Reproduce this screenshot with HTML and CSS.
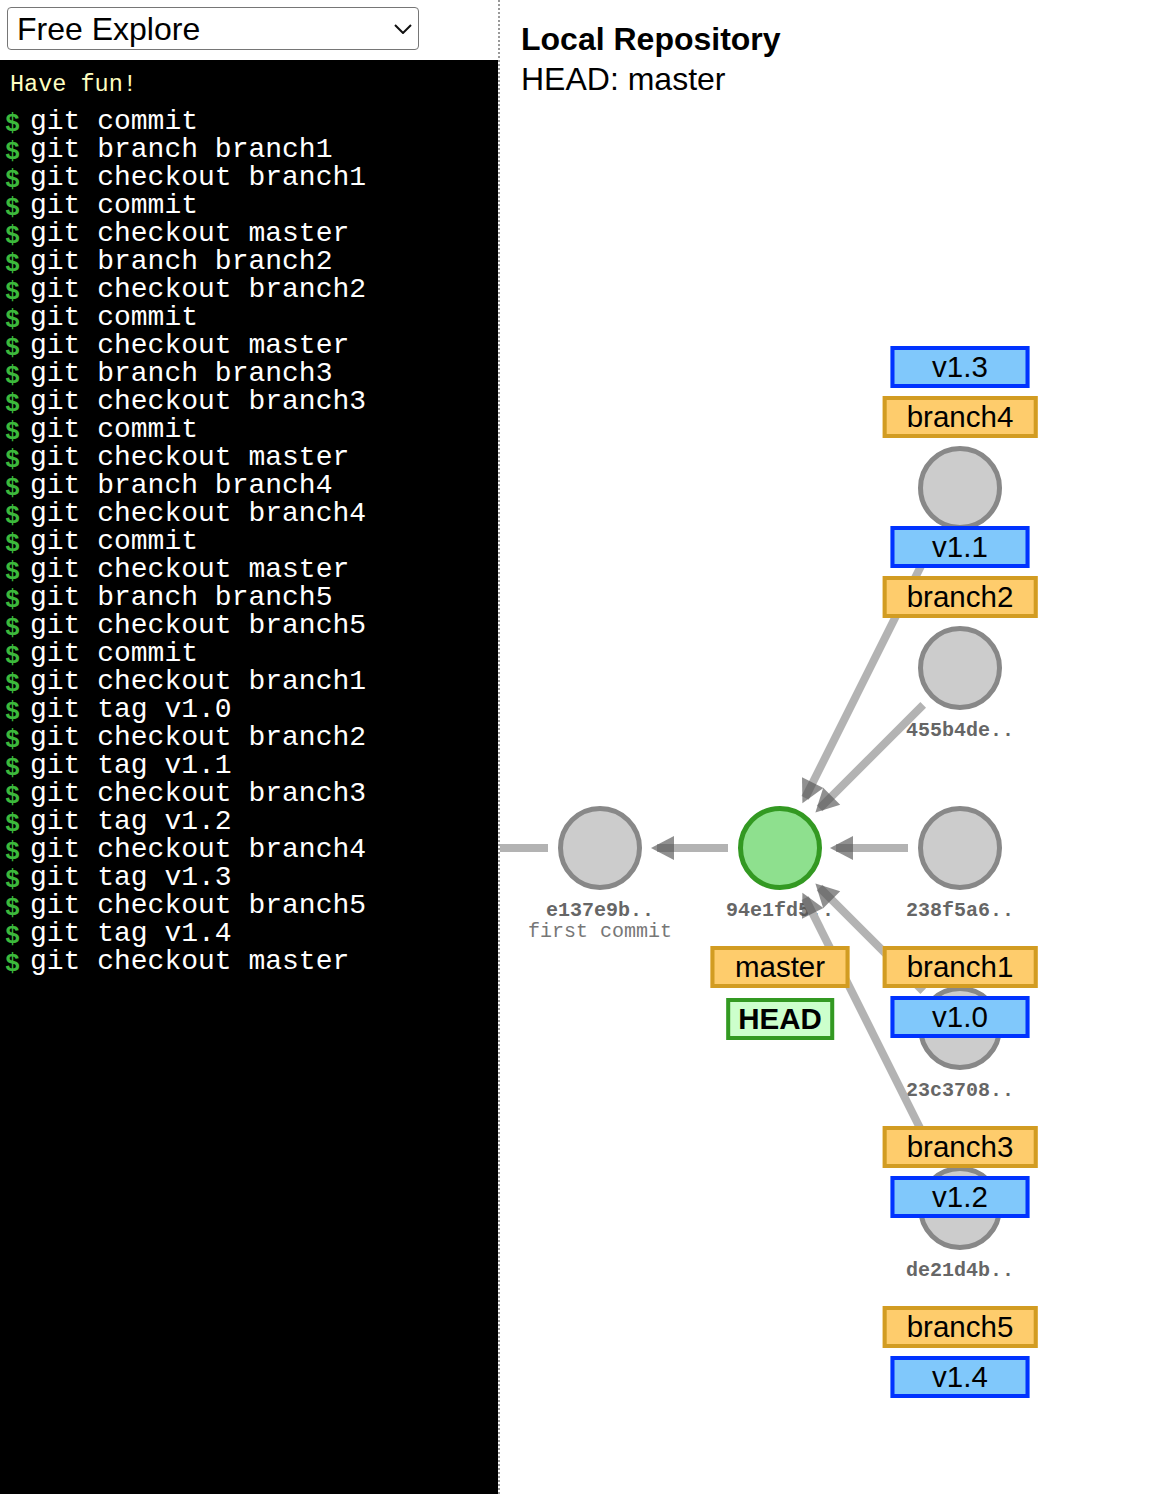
FILE: index.html
```html
<!doctype html>
<html lang="en">
<head>
    <meta charset="UTF-8">
    <meta name="viewport" content="width=device-width, initial-scale=1.0">
    <title>Git Sandbox - Free Explore</title>
    <link rel="stylesheet" href="styles.css">
</head>
<body>
    <div class="page">
        <div class="side">
            <div class="picker">
                <select class="level-select">
                    <option>Free Explore</option>
                </select>
                <svg class="chevron" width="18" height="10" viewBox="0 0 18 10">
                    <polyline points="1,1 9,9 17,1" fill="none" stroke="#111" stroke-width="2"/>
                </svg>
            </div>
            <div class="terminal">
                <div class="greet">Have fun!</div>
                <div class="cmd"><span class="prompt">$</span>git commit</div>
                <div class="cmd"><span class="prompt">$</span>git branch branch1</div>
                <div class="cmd"><span class="prompt">$</span>git checkout branch1</div>
                <div class="cmd"><span class="prompt">$</span>git commit</div>
                <div class="cmd"><span class="prompt">$</span>git checkout master</div>
                <div class="cmd"><span class="prompt">$</span>git branch branch2</div>
                <div class="cmd"><span class="prompt">$</span>git checkout branch2</div>
                <div class="cmd"><span class="prompt">$</span>git commit</div>
                <div class="cmd"><span class="prompt">$</span>git checkout master</div>
                <div class="cmd"><span class="prompt">$</span>git branch branch3</div>
                <div class="cmd"><span class="prompt">$</span>git checkout branch3</div>
                <div class="cmd"><span class="prompt">$</span>git commit</div>
                <div class="cmd"><span class="prompt">$</span>git checkout master</div>
                <div class="cmd"><span class="prompt">$</span>git branch branch4</div>
                <div class="cmd"><span class="prompt">$</span>git checkout branch4</div>
                <div class="cmd"><span class="prompt">$</span>git commit</div>
                <div class="cmd"><span class="prompt">$</span>git checkout master</div>
                <div class="cmd"><span class="prompt">$</span>git branch branch5</div>
                <div class="cmd"><span class="prompt">$</span>git checkout branch5</div>
                <div class="cmd"><span class="prompt">$</span>git commit</div>
                <div class="cmd"><span class="prompt">$</span>git checkout branch1</div>
                <div class="cmd"><span class="prompt">$</span>git tag v1.0</div>
                <div class="cmd"><span class="prompt">$</span>git checkout branch2</div>
                <div class="cmd"><span class="prompt">$</span>git tag v1.1</div>
                <div class="cmd"><span class="prompt">$</span>git checkout branch3</div>
                <div class="cmd"><span class="prompt">$</span>git tag v1.2</div>
                <div class="cmd"><span class="prompt">$</span>git checkout branch4</div>
                <div class="cmd"><span class="prompt">$</span>git tag v1.3</div>
                <div class="cmd"><span class="prompt">$</span>git checkout branch5</div>
                <div class="cmd"><span class="prompt">$</span>git tag v1.4</div>
                <div class="cmd"><span class="prompt">$</span>git checkout master</div>
            </div>
        </div>

        <div class="repo">
            <h1 class="repo-title">Local Repository</h1>
            <div class="repo-head">HEAD: master</div>

            <!-- commit graph, coordinates relative to the repo panel -->
            <svg class="graph" width="670" height="1494" viewBox="0 0 670 1494">
                <g class="hashes">
                    <text x="100" y="916" class="hash">e137e9b..</text>
                    <text x="100" y="937" class="msg">first commit</text>
                    <text x="280" y="916" class="hash">94e1fd5..</text>
                    <text x="460" y="916" class="hash">238f5a6..</text>
                    <text x="460" y="736" class="hash">455b4de..</text>
                    <text x="460" y="1096" class="hash">23c3708..</text>
                    <text x="460" y="1276" class="hash">de21d4b..</text>
                </g>
                <g class="edges">
                    <line x1="48" y1="848" x2="-20" y2="848"/>
                    <line x1="228" y1="848" x2="157" y2="848"/>
                    <line x1="408" y1="848" x2="336" y2="848"/>
                    <line x1="423.2" y1="704.8" x2="319.6" y2="808.4"/>
                    <line x1="436.7" y1="534.5" x2="305.1" y2="797.9"/>
                    <line x1="423.2" y1="991.2" x2="319.6" y2="887.6"/>
                    <line x1="436.7" y1="1161.5" x2="305.1" y2="898.1"/>
                </g>
                <g class="heads">
                    <polygon points="151,848 174,836 174,860"/>
                    <polygon points="330,848 353,836 353,860"/>
                    <polygon points="315.4,812.6 323.2,787.8 340.2,804.8"/>
                    <polygon points="302.4,803.3 302.0,777.3 323.4,788.1"/>
                    <polygon points="315.4,883.4 340.2,891.2 323.2,908.2"/>
                    <polygon points="302.4,892.7 323.4,907.9 302.0,918.7"/>
                </g>
                <g class="nodes">
                    <circle cx="100" cy="848" r="39.5"/>
                    <circle cx="280" cy="848" r="39.5" class="current"/>
                    <circle cx="460" cy="848" r="39.5"/>
                    <circle cx="460" cy="668" r="39.5"/>
                    <circle cx="460" cy="488" r="39.5"/>
                    <circle cx="460" cy="1028" r="39.5"/>
                    <circle cx="460" cy="1208" r="39.5"/>
                </g>
            </svg>

            <div class="ref tag" style="left:460px;top:346px">v1.3</div>
            <div class="ref branch" style="left:460px;top:396px">branch4</div>
            <div class="ref tag" style="left:460px;top:526px">v1.1</div>
            <div class="ref branch" style="left:460px;top:576px">branch2</div>
            <div class="ref branch" style="left:280px;top:946px">master</div>
            <div class="ref head" style="left:280px;top:998px">HEAD</div>
            <div class="ref branch" style="left:460px;top:946px">branch1</div>
            <div class="ref tag" style="left:460px;top:996px">v1.0</div>
            <div class="ref branch" style="left:460px;top:1126px">branch3</div>
            <div class="ref tag" style="left:460px;top:1176px">v1.2</div>
            <div class="ref branch" style="left:460px;top:1306px">branch5</div>
            <div class="ref tag" style="left:460px;top:1356px">v1.4</div>
        </div>
    </div>
</body>
</html>
```
FILE: styles.css
```css
body {
    margin: 0;
    padding: 0;
    font-family: "Liberation Sans", Arial, sans-serif;
    background: #fff;
    overflow: hidden;
}
.page {
    display: flex;
    height: 100vh;
}
.side {
    width: 498px;
    border-right: 2px dotted #999;
    display: flex;
    flex-direction: column;
}
.picker {
    position: relative;
    padding: 7px 7px 10px 7px;
    background: #fff;
}
.level-select {
    appearance: none;
    -webkit-appearance: none;
    display: block;
    width: 412px;
    height: 43px;
    box-sizing: border-box;
    border: 1px solid #767676;
    border-radius: 4px;
    background: #fff;
    color: #000;
    padding: 0 0 0 9px;
    font-family: "Liberation Sans", Arial, sans-serif;
    font-size: 32px;
}
.chevron {
    position: absolute;
    left: 394px;
    top: 24px;
    pointer-events: none;
}
.terminal {
    flex: 1;
    background: #000;
    padding: 11px 5px 0 5px;
    font-family: "Liberation Mono", "Courier New", monospace;
    color: #fff;
}
.greet {
    color: #ffffc0;
    font-size: 23.5px;
    line-height: 28px;
    padding-left: 5px;
    margin-bottom: 9px;
}
.cmd {
    display: flex;
    font-size: 28px;
    line-height: 28px;
    white-space: pre;
}
.prompt {
    width: 25px;
    flex: none;
    color: #3cb93c;
    font-weight: bold;
    font-size: 25px;
    position: relative;
    top: 3px;
}
.repo {
    flex: 1;
    position: relative;
    padding: 19px 0 0 21px;
}
.repo-title {
    margin: 0;
    font-size: 32px;
    line-height: 40px;
    font-weight: bold;
}
.repo-head {
    font-size: 32px;
    line-height: 40px;
}
.graph {
    position: absolute;
    left: 0;
    top: 0;
}
.hashes text {
    font-family: "Liberation Mono", "Courier New", monospace;
    font-size: 20px;
    fill: #666;
    text-anchor: middle;
}
.hashes .hash {
    font-weight: bold;
}
.hashes .msg {
    fill: #777;
}
.edges line {
    stroke: #b3b3b3;
    stroke-width: 8;
}
.heads polygon {
    fill: rgba(85, 85, 85, 0.65);
}
.nodes circle {
    fill: #ccc;
    stroke: #888;
    stroke-width: 5;
}
.nodes circle.current {
    fill: #8ee08e;
    stroke: #339922;
}
.ref {
    position: absolute;
    transform: translateX(-50%);
    box-sizing: border-box;
    height: 42px;
    border: 4px solid;
    font-size: 29.5px;
    line-height: 33px;
    text-align: center;
    white-space: nowrap;
    color: #000;
}
.branch {
    min-width: 139px;
    padding: 0 20px;
    background: #fecc6c;
    border-color: #d29c22;
}
.tag {
    width: 139px;
    background: #80c8fb;
    border-color: #0033ff;
}
.head {
    padding: 0 8px;
    font-weight: bold;
    background: #ccffcc;
    border-color: #339922;
}
```
